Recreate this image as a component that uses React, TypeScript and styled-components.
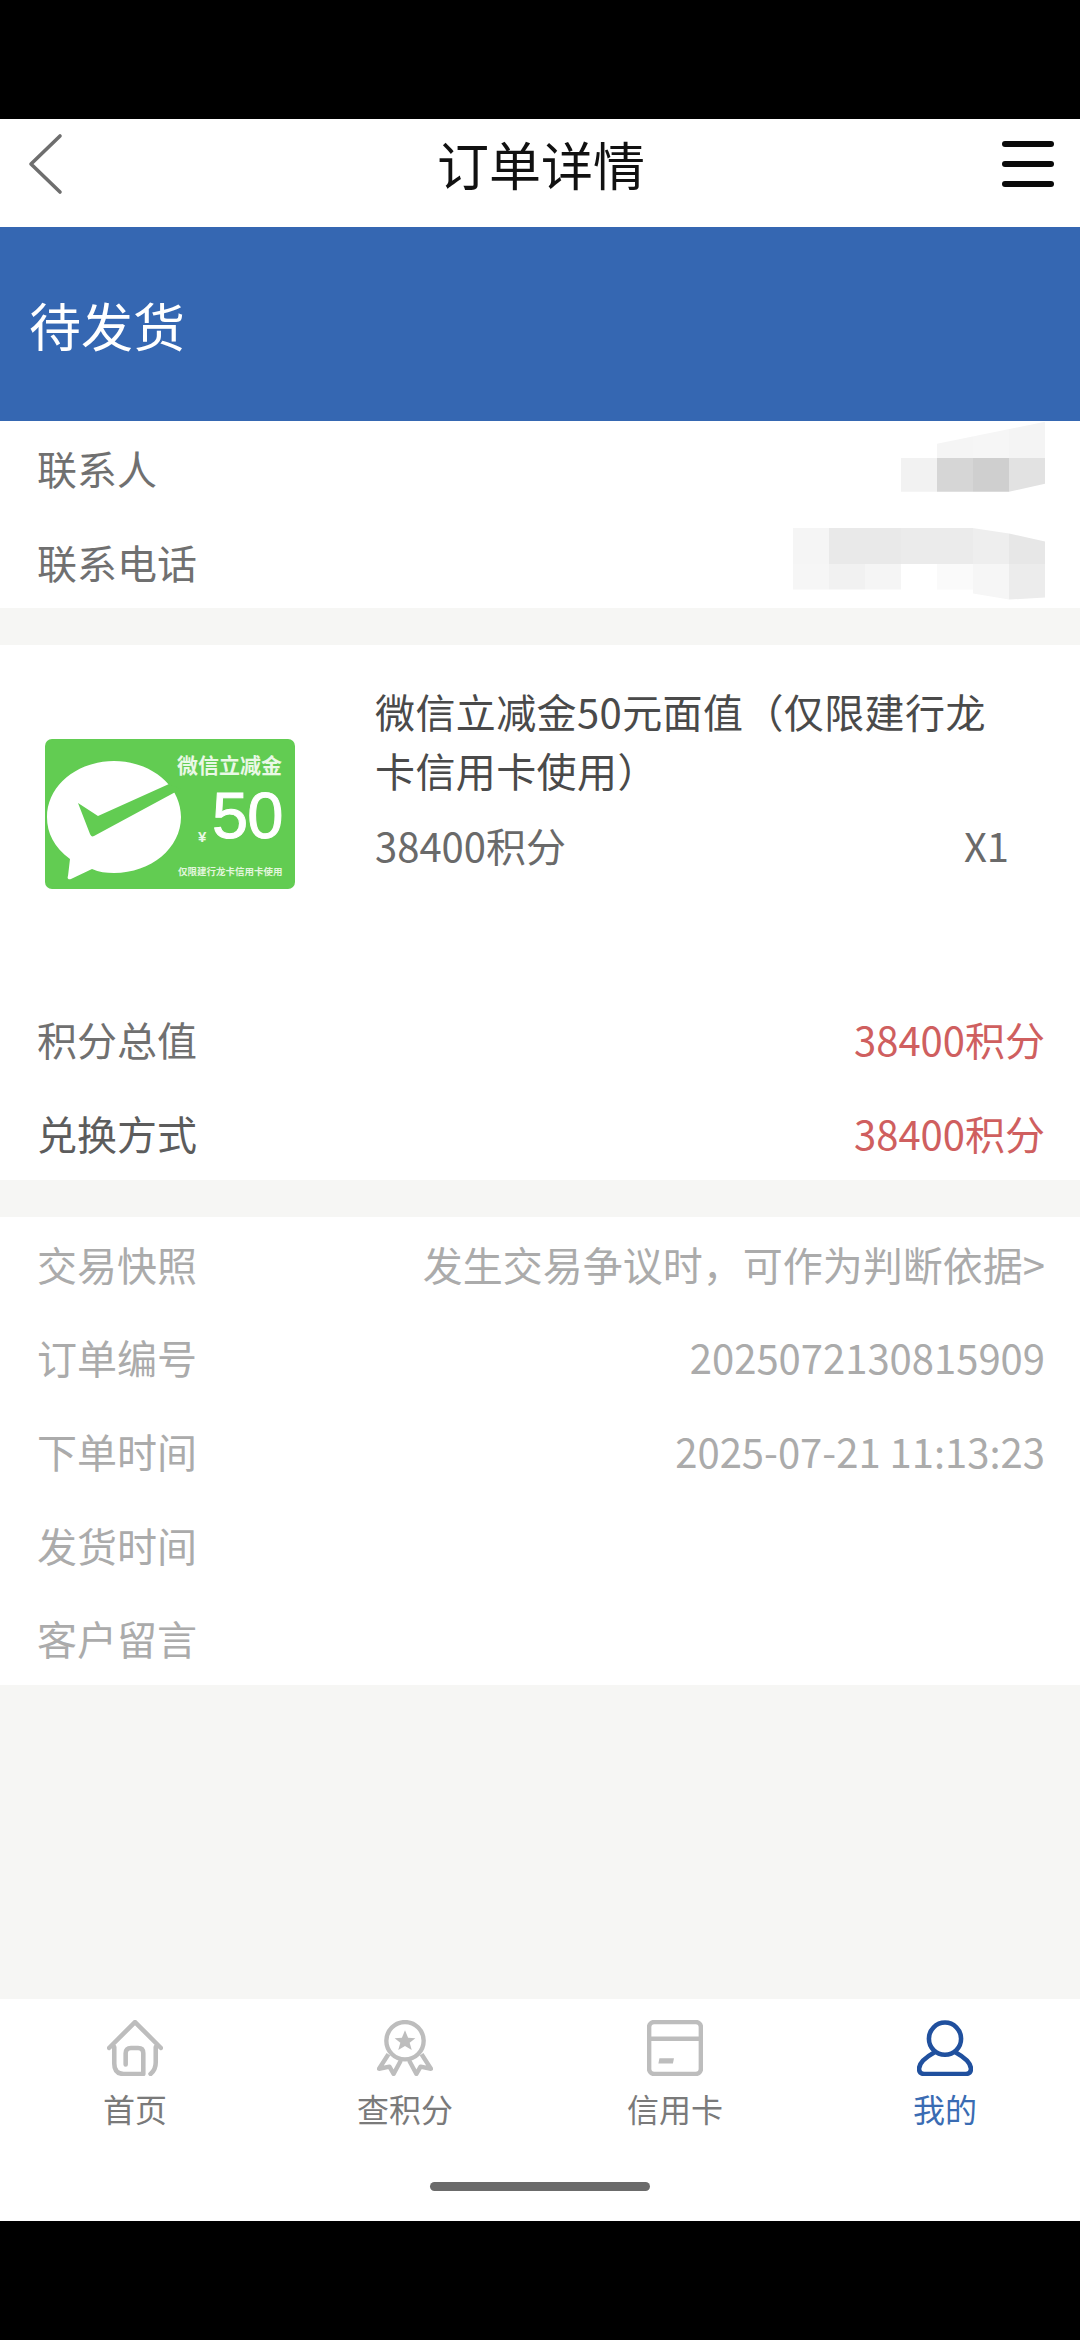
import React from 'react'
import styled, { createGlobalStyle } from 'styled-components'

const GlobalStyle = createGlobalStyle`
    * {
        box-sizing: border-box;
    }
    body {
        margin: 0;
        background: #000;
        font-family: "Noto Sans CJK SC", "Liberation Sans", sans-serif;
    }
`

const contactCells = [
    ['transparent', '#f5f5f5', '#f6f6f6', '#f4f4f4'],
    ['#f2f2f2', '#d6d6d6', '#cfcfcf', '#e2e2e2'],
]

const phoneCells = [
    ['#f5f5f5', '#e9e9e9', '#e9e9e9', '#ebebeb', '#ebebeb', '#eeeeee', '#e7e7e7'],
    ['#f6f6f6', '#f1f1f1', '#f5f5f5', 'transparent', '#fafafa', '#f6f6f6', '#ececec'],
]

const orderRows = [
    { label: '交易快照', value: '发生交易争议时，可作为判断依据>' },
    { label: '订单编号', value: '2025072130815909' },
    { label: '下单时间', value: '2025-07-21 11:13:23' },
    { label: '发货时间', value: '' },
    { label: '客户留言', value: '' },
]

const HomeIcon = () => (
    <svg width="56" height="56" viewBox="0 0 54 54" fill="none" stroke="#bdbdbd" strokeWidth="4.4" strokeLinecap="round" strokeLinejoin="round">
        <path d="M2 27 L27 2 L52 27" />
        <path d="M7 26 V42 Q7 52 16 52 H35 V32 Q35 27 30 27 H23 Q18 27 18 32 V43" />
        <path d="M47 26 V41 Q47 48 42 52" />
    </svg>
)

const MedalIcon = () => (
    <svg width="56" height="56" viewBox="0 0 54 54" fill="none" stroke="#bdbdbd" strokeWidth="4.2" strokeLinejoin="round">
        <circle cx="27" cy="20" r="18" />
        <path d="M27 10 L30 17 L37 17.5 L31.5 22 L33.5 29 L27 25 L20.5 29 L22.5 22 L17 17.5 L24 17 Z" fill="#bdbdbd" stroke="none" />
        <path d="M11 33 L2 47 L12 45 L16 52 L23 39" />
        <path d="M43 33 L52 47 L42 45 L38 52 L31 39" />
    </svg>
)

const CardIcon = () => (
    <svg width="56" height="56" viewBox="0 0 54 54" fill="none" stroke="#bdbdbd" strokeWidth="4.4">
        <rect x="2" y="2" width="50" height="50" rx="5" />
        <path d="M2 18 H52" />
        <path d="M12 37 H26 L25 42 H11 Z" fill="#bdbdbd" stroke="none" />
    </svg>
)

const PersonIcon = () => (
    <svg width="56" height="56" viewBox="0 0 54 54" fill="none" stroke="#20509e" strokeWidth="4.4" strokeLinejoin="round">
        <circle cx="27" cy="18" r="15.5" />
        <path d="M17 31 C8 36 2 42 2 47 Q2 52 7 52 H47 Q52 52 52 47 C52 42 46 36 37 31" />
    </svg>
)

const tabs = [
    { label: '首页', icon: <HomeIcon /> },
    { label: '查积分', icon: <MedalIcon /> },
    { label: '信用卡', icon: <CardIcon /> },
    { label: '我的', icon: <PersonIcon />, active: true },
]

const VoucherArt = () => (
    <svg width="250" height="150" viewBox="0 0 250 150">
        <rect x="0" y="0" width="250" height="150" rx="7" fill="#62cc52" />
        <path d="M25 120 C9 108 2 94 2 78 C2 47 32 22 69 22 C106 22 136 47 136 78 C136 109 106 134 69 134 C61 134 54 133 47 130 L26 140 C23 141 22 139 23 137 Z" fill="#fff" />
        <path d="M33 64 L53 77 L124 45 L136 50 L49 97 C47 98 46 97 45 95 Z" fill="#62cc52" />
        <text x="132" y="34" fontSize="21" fontWeight="700" fill="#eaf8e6" fontFamily="'Noto Sans CJK SC', sans-serif">微信立减金</text>
        <text x="153" y="103" fontSize="15" fontWeight="700" fill="#eaf8e6" fontFamily="'Liberation Sans', sans-serif">¥</text>
        <text x="167" y="99" fontSize="65" letterSpacing="-1" stroke="#fff" strokeWidth="1" fill="#fff" fontFamily="'Liberation Sans', sans-serif">50</text>
        <text x="133" y="136" fontSize="9.5" fontWeight="700" fill="#e2f6dd" fontFamily="'Noto Sans CJK SC', sans-serif">仅限建行龙卡信用卡使用</text>
    </svg>
)

const App = () => {
    return (
        <Page>
            <GlobalStyle />
            <BlackBar />
            <Screen>
                <Header>
                    <BackButton>
                        <svg width="36" height="62" viewBox="0 0 36 62" fill="none" stroke="#6e6e6e" strokeWidth="3.6" strokeLinecap="round" strokeLinejoin="round">
                            <path d="M32 3 L3 31 L32 59" />
                        </svg>
                    </BackButton>
                    <Title>订单详情</Title>
                    <MenuButton>
                        <MenuLine />
                        <MenuLine />
                        <MenuLine />
                    </MenuButton>
                </Header>
                <StatusBanner>待发货</StatusBanner>

                <Section>
                    <Row>
                        <Label>联系人</Label>
                        <Mosaic $columns={4} $lift={20} $clip="polygon(36px 35px, 36px 22px, 144px 0, 144px 62px, 108px 70px, 0 70px, 0 35px)">
                            {contactCells.flat().map((shade, index) => (
                                <MosaicCell key={index} $shade={shade} />
                            ))}
                        </Mosaic>
                    </Row>
                    <Row>
                        <Label>联系电话</Label>
                        <Mosaic $columns={7} $lift={-4} $clip="polygon(0 0, 176px 0, 216px 6px, 252px 14px, 252px 70px, 216px 72px, 180px 66px, 180px 62px, 0 62px)">
                            {phoneCells.flat().map((shade, index) => (
                                <MosaicCell key={index} $shade={shade} />
                            ))}
                        </Mosaic>
                    </Row>
                </Section>

                <Section>
                    <Product>
                        <VoucherImage>
                            <VoucherArt />
                        </VoucherImage>
                        <ProductInfo>
                            <ProductName>微信立减金50元面值（仅限建行龙卡信用卡使用）</ProductName>
                            <PriceRow>
                                <span>38400积分</span>
                                <span>X1</span>
                            </PriceRow>
                        </ProductInfo>
                    </Product>
                    <Row>
                        <Label>积分总值</Label>
                        <RedValue>38400积分</RedValue>
                    </Row>
                    <Row>
                        <Label $dark>兑换方式</Label>
                        <RedValue>38400积分</RedValue>
                    </Row>
                </Section>

                <Section>
                    {orderRows.map((row) => (
                        <Row key={row.label}>
                            <Label $light>{row.label}</Label>
                            <LightValue>{row.value}</LightValue>
                        </Row>
                    ))}
                </Section>

                <BottomArea>
                    <TabBar>
                        {tabs.map((tab) => (
                            <Tab key={tab.label} $active={tab.active}>
                                {tab.icon}
                                <span>{tab.label}</span>
                            </Tab>
                        ))}
                    </TabBar>
                    <HomeIndicator />
                </BottomArea>
            </Screen>
            <BlackBar />
        </Page>
    )
}

export default App

const Page = styled.div`
    display: flex;
    flex-direction: column;
    width: 1080px;
    height: 2340px;
    background: #000;
`

const BlackBar = styled.div`
    flex: 0 0 119px;
    background: #000;
`

const Screen = styled.div`
    flex: 1;
    display: flex;
    flex-direction: column;
    background: #f6f6f4;
`

const Header = styled.div`
    display: grid;
    grid-template-columns: 1fr auto 1fr;
    align-items: center;
    height: 108px;
    padding: 0 26px 18px 28px;
    background: #fff;
`

const BackButton = styled.div`
    display: flex;
    justify-self: start;
`

const Title = styled.div`
    font-size: 52px;
    line-height: 70px;
    color: #111;
`

const MenuButton = styled.div`
    display: flex;
    flex-direction: column;
    gap: 14px;
    justify-self: end;
`

const MenuLine = styled.div`
    width: 52px;
    height: 6px;
    border-radius: 3px;
    background: #0a0a0a;
`

const StatusBanner = styled.div`
    display: flex;
    align-items: center;
    height: 194px;
    padding-left: 29px;
    font-size: 52px;
    color: #fff;
    background: #3567b2;
`

const Section = styled.div`
    margin-bottom: 37px;
    background: #fff;
`

const Row = styled.div`
    display: flex;
    align-items: center;
    justify-content: space-between;
    height: 93.7px;
    padding: 0 35px 0 37px;
`

const Label = styled.div<{ $light?: boolean; $dark?: boolean }>`
    font-size: 40px;
    color: ${(props) => (props.$light ? '#ababab' : props.$dark ? '#5c5c5c' : '#707070')};
`

const RedValue = styled.div`
    font-size: 40px;
    color: #cf5f5f;
`

const LightValue = styled.div`
    font-size: 40px;
    color: #ababab;
`

const Mosaic = styled.div<{ $columns: number; $lift: number; $clip: string }>`
    display: grid;
    grid-template-columns: repeat(${(props) => props.$columns}, 36px);
    grid-auto-rows: 36px;
    margin-bottom: ${(props) => props.$lift}px;
    clip-path: ${(props) => props.$clip};
`

const MosaicCell = styled.div<{ $shade: string }>`
    background: ${(props) => props.$shade};
`

const Product = styled.div`
    display: grid;
    grid-template-columns: 250px 1fr;
    column-gap: 80px;
    height: 347px;
    padding: 37px 71px 0 45px;
`

const VoucherImage = styled.div`
    display: flex;
    padding-top: 57px;
`

const ProductInfo = styled.div`
    display: flex;
    flex-direction: column;
`

const ProductName = styled.div`
    font-size: 40px;
    line-height: 59px;
    letter-spacing: 0.4px;
    color: #4a4a4a;
`

const PriceRow = styled.div`
    display: flex;
    align-items: center;
    justify-content: space-between;
    height: 90px;
    font-size: 40px;
    color: #6a6a6a;
`

const BottomArea = styled.div`
    display: flex;
    flex-direction: column;
    align-items: center;
    height: 222px;
    margin-top: auto;
    background: #fff;
`

const TabBar = styled.div`
    display: grid;
    grid-template-columns: repeat(4, 1fr);
    width: 100%;
    padding-top: 21px;
`

const Tab = styled.div<{ $active?: boolean }>`
    display: flex;
    flex-direction: column;
    align-items: center;
    gap: 9px;
    font-size: 32px;
    line-height: 46px;
    color: ${(props) => (props.$active ? '#3a6cb3' : '#7a7a7a')};
`

const HomeIndicator = styled.div`
    width: 220px;
    height: 9px;
    margin-top: 51px;
    border-radius: 5px;
    background: #6b6b6b;
`
